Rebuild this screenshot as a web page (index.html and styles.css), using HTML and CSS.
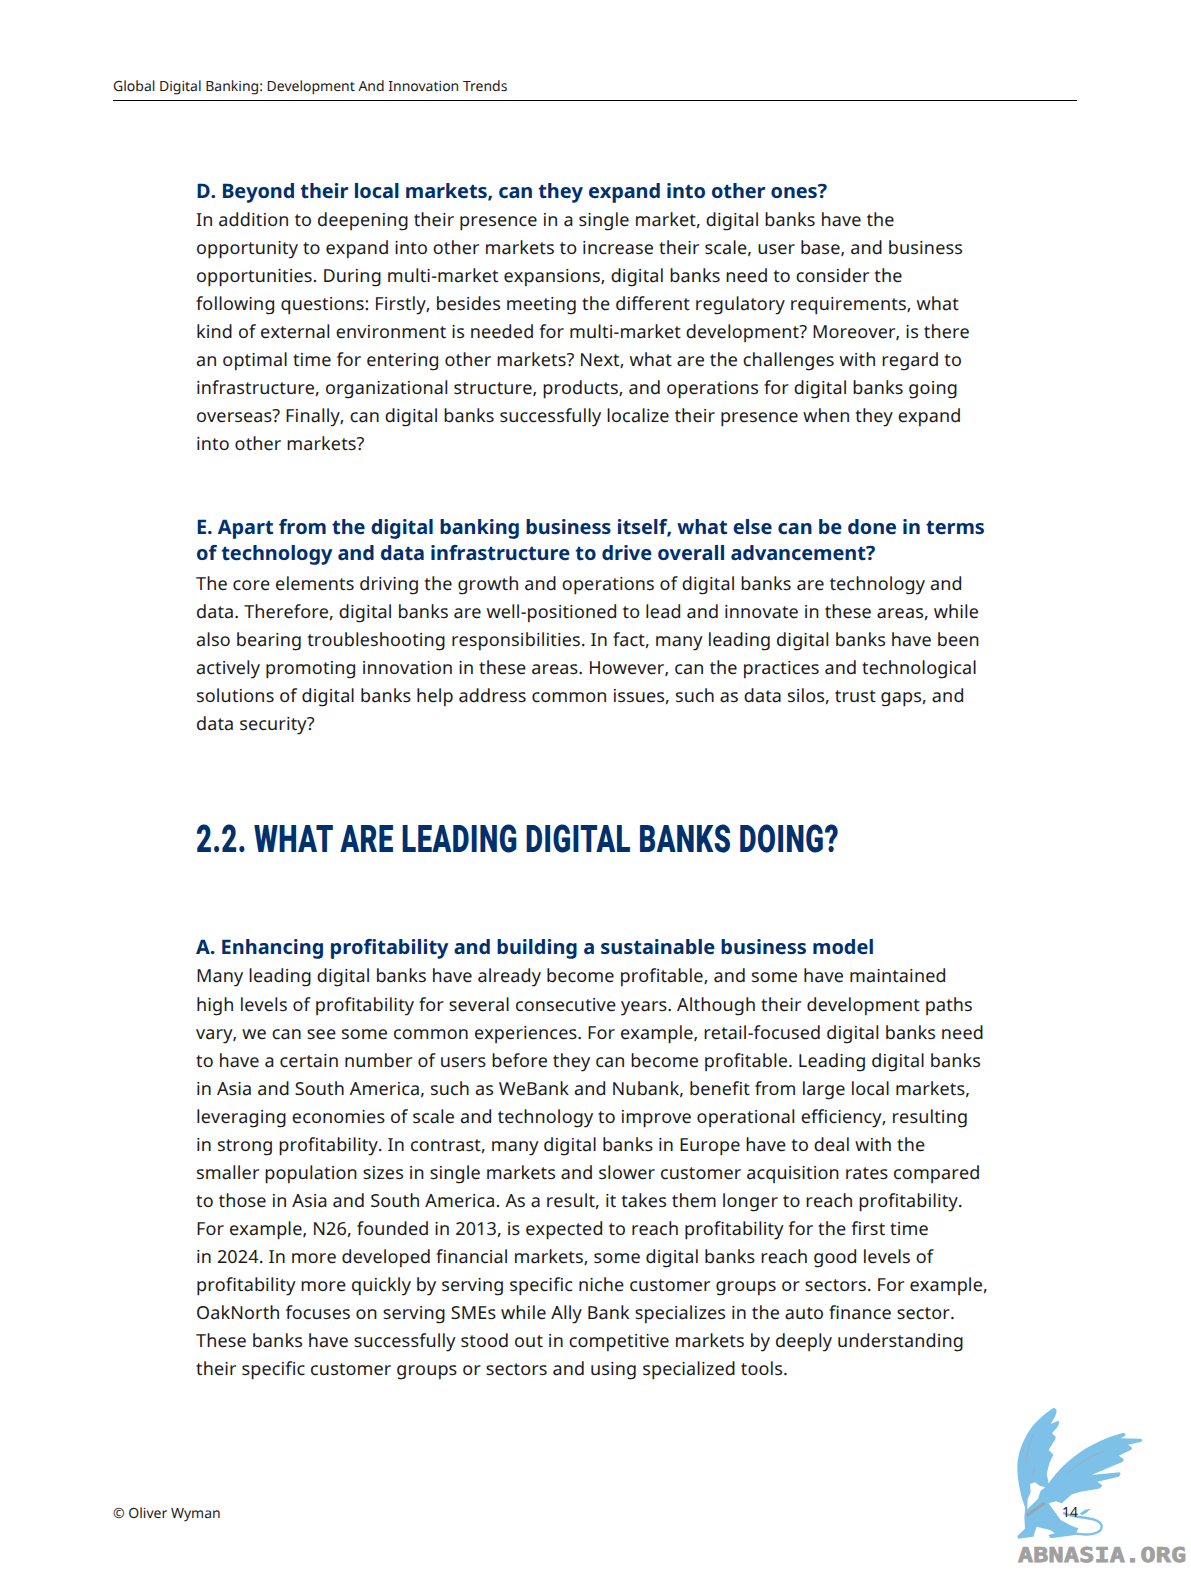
FILE: index.html
```html
<!DOCTYPE html>
<html lang="en">
<head>
<meta charset="utf-8">
<title>Global Digital Banking</title>
<link rel="stylesheet" href="styles.css">
</head>
<body>
<div class="page">
  <header class="running-head">Global Digital Banking: Development And Innovation Trends</header>
  <main class="content">
    <h3 class="sub first">D. Beyond their local markets, can they expand into other ones?</h3>
    <p class="body tight">In addition to deepening their presence in a single market, digital banks have the<br>opportunity to expand into other markets to increase their scale, user base, and business<br>opportunities. During multi-market expansions, digital banks need to consider the<br>following questions: Firstly, besides meeting the different regulatory requirements, what<br>kind of external environment is needed for multi-market development? Moreover, is there<br>an optimal time for entering other markets? Next, what are the challenges with regard to<br>infrastructure, organizational structure, products, and operations for digital banks going<br>overseas? Finally, can digital banks successfully localize their presence when they expand<br>into other markets?</p>
    <h3 class="sub second">E. Apart from the digital banking business itself, what else can be done in terms<br>of technology and data infrastructure to drive overall advancement?</h3>
    <p class="body loose">The core elements driving the growth and operations of digital banks are technology and<br>data. Therefore, digital banks are well-positioned to lead and innovate in these areas, while<br>also bearing troubleshooting responsibilities. In fact, many leading digital banks have been<br>actively promoting innovation in these areas. However, can the practices and technological<br>solutions of digital banks help address common issues, such as data silos, trust gaps, and<br>data security?</p>
    <h2 class="section">2.2. WHAT ARE LEADING DIGITAL BANKS DOING?</h2>
    <h3 class="sub third">A. Enhancing profitability and building a sustainable business model</h3>
    <p class="body tight">Many leading digital banks have already become profitable, and some have maintained<br>high levels of profitability for several consecutive years. Although their development paths<br>vary, we can see some common experiences. For example, retail-focused digital banks need<br>to have a certain number of users before they can become profitable. Leading digital banks<br>in Asia and South America, such as WeBank and Nubank, benefit from large local markets,<br>leveraging economies of scale and technology to improve operational efficiency, resulting<br>in strong profitability. In contrast, many digital banks in Europe have to deal with the<br>smaller population sizes in single markets and slower customer acquisition rates compared<br>to those in Asia and South America. As a result, it takes them longer to reach profitability.<br>For example, N26, founded in 2013, is expected to reach profitability for the first time<br>in 2024. In more developed financial markets, some digital banks reach good levels of<br>profitability more quickly by serving specific niche customer groups or sectors. For example,<br>OakNorth focuses on serving SMEs while Ally Bank specializes in the auto finance sector.<br>These banks have successfully stood out in competitive markets by deeply understanding<br>their specific customer groups or sectors and using specialized tools.</p>
  </main>
  <footer class="foot"><span>© Oliver Wyman</span></footer>
  <div class="mark">
    <svg class="griffin" viewBox="0 0 603 600" aria-hidden="true">
      <path class="blue" d="M190 72 Q197 70 200 80 Q200 92 182 120 L205 110 Q210 116 203 128 L186 148 L197 158 Q198 168 188 178 L176 198 L190 212 L178 238 L170 270 L176 298 C200 262 232 232 268 206 C305 180 355 158 400 146 Q410 148 405 155 L392 163 L452 164 Q462 168 452 174 L414 182 Q430 190 424 197 L386 215 L400 224 Q404 232 392 236 L362 248 L305 273 L388 265 Q396 270 386 278 L322 293 L336 303 Q336 312 322 315 L272 323 L246 331 L215 358 L198 352 L176 358 C190 378 200 392 212 408 C235 420 250 430 265 432 L256 453 L182 463 L175 453 L195 448 L180 438 L140 428 L130 458 L85 464 L82 456 L105 434 L103 398 L106 372 C92 335 82 290 82 245 C84 205 100 165 125 130 C145 105 170 85 190 72 Z"/>
      <path class="tail" d="M222 388 C255 405 325 395 335 425 C338 450 295 455 258 449"/>
      <path class="blue" d="M268 390 L285 377 L302 374 L291 385 L278 393 Z"/>
      <path class="white" d="M120 300 L135 295 L150 306 L166 310 L152 320 L144 345 L112 376 L113 345 L122 325 Z"/>
      <path class="grey" d="M131 152 C120 170 110 205 108 235"/>
      <path class="grey" d="M340 203 C305 215 265 235 235 268"/>
      <path class="stripe" d="M110 395 L165 356"/>
      <path class="grey" d="M133 252 L128 272"/>
    </svg>
    <div class="wm">ABNASIA.ORG</div>
    <span class="num">14</span>
  </div>
</div>
</body>
</html>
```
FILE: styles.css
```css
html, body { margin: 0; padding: 0; background: #fff; }
.page {
  position: relative;
  width: 1191px;
  height: 1584px;
  overflow: hidden;
  font-family: "Noto Sans", "Open Sans", sans-serif;
  color: #1c1c1c;
  font-variant-ligatures: none;
  text-rendering: geometricPrecision;
}
.running-head {
  margin: 0 114px 0 113px;
  padding-top: 77px;
  height: 23px;
  line-height: 20px;
  font-size: 14px;
  border-bottom: 1px solid #000;
}
.content { padding: 0 0 0 196px; }
.sub {
  margin: 0;
  font-size: 19.85px;
  line-height: 26px;
  font-weight: 700;
  font-kerning: none;
  color: #00306e;
}
.first { margin-top: 77px; letter-spacing: -0.03px; }
.second { margin-top: 56px; }
.third { margin-top: 0; letter-spacing: 0.05px; }
.body {
  margin: 0;
  font-size: 18px;
  line-height: 28.03px;
  letter-spacing: 0.15px;
  font-kerning: none;
  white-space: nowrap;
}
.tight { margin-top: 2px; }
.loose { margin-top: 4px; }
.section {
  margin: 78px 0 70px;
  font-family: "Roboto", sans-serif;
  font-size: 38px;
  line-height: 48px;
  font-weight: 900;
  letter-spacing: 0.8px;
  color: #00306e;
  white-space: nowrap;
  transform: scaleX(0.72);
  transform-origin: left center;
}
.foot {
  position: absolute;
  left: 113px;
  top: 1504px;
  font-size: 14px;
  line-height: 20px;
}
.mark { position: absolute; left: 990px; top: 1384px; width: 201px; height: 200px; }
.griffin { display: block; width: 201px; height: 200px; }
.blue { fill: #7dc1e8; }
.white { fill: #fff; }
.tail { fill: none; stroke: #7dc1e8; stroke-width: 7; stroke-linecap: round; }
.grey { fill: none; stroke: #a0adb9; stroke-width: 3; stroke-linecap: round; }
.stripe { fill: none; stroke: #97a5b1; stroke-width: 9; }
.num {
  position: absolute;
  left: 72px;
  top: 119px;
  font-size: 14px;
  line-height: 20px;
}
.wm {
  position: absolute;
  left: 28px;
  top: 160px;
  font-family: "DejaVu Sans Mono", monospace;
  font-weight: 700;
  font-size: 20.5px;
  line-height: 22px;
  letter-spacing: 0.2px;
  color: #a0a0a0;
  -webkit-text-stroke: 0.8px #a0a0a0;
  white-space: nowrap;
  transform: scaleX(1.22);
  transform-origin: left center;
}
```
